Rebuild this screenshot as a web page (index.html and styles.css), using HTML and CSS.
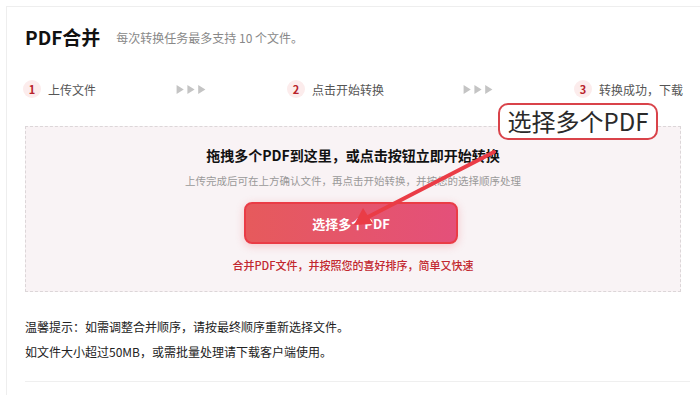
FILE: index.html
```html
<!DOCTYPE html>
<html lang="zh">
<head>
<meta charset="utf-8">
<title>PDF合并</title>
<link rel="stylesheet" href="styles.css">
</head>
<body>
<div class="page">
  <div class="header">
    <h1 class="title">PDF合并</h1>
    <span class="subtitle">每次转换任务最多支持 10 个文件。</span>
  </div>
  <div class="steps">
    <div class="step"><span class="num">1</span><span class="label">上传文件</span></div>
    <div class="arrows">
      <svg width="32" height="10" viewBox="0 0 32 10"><path d="M0 0L8 5L0 10Z M12 0L20 5L12 10Z M24 0L32 5L24 10Z" fill="#c4c4c4"/></svg>
    </div>
    <div class="step"><span class="num">2</span><span class="label">点击开始转换</span></div>
    <div class="arrows">
      <svg width="32" height="10" viewBox="0 0 32 10"><path d="M0 0L8 5L0 10Z M12 0L20 5L12 10Z M24 0L32 5L24 10Z" fill="#c4c4c4"/></svg>
    </div>
    <div class="step"><span class="num">3</span><span class="label">转换成功，下载</span></div>
  </div>
  <div class="dropzone">
    <div class="dz-title">拖拽多个PDF到这里，或点击按钮立即开始转换</div>
    <div class="dz-sub">上传完成后可在上方确认文件，再点击开始转换，并按您的选择顺序处理</div>
    <button class="btn">选择多个PDF</button>
    <div class="dz-tip">合并PDF文件，并按照您的喜好排序，简单又快速</div>
  </div>
  <div class="notes">
    <p>温馨提示：如需调整合并顺序，请按最终顺序重新选择文件。</p>
    <p>如文件大小超过50MB，或需批量处理请下载客户端使用。</p>
  </div>
  <div class="bottom-line"></div>
</div>
<div class="callout">选择多个PDF</div>
<svg class="annot-arrow" width="700" height="395" viewBox="0 0 700 395">
  <line x1="494" y1="152" x2="368" y2="217" stroke="#ea3c46" stroke-width="4" stroke-linecap="round"/>
  <path d="M354 225L363 208L373 224Z" fill="#ea3c46"/>
</svg>
</body>
</html>
```

FILE: styles.css
```css
* { box-sizing: border-box; }
html, body { margin: 0; padding: 0; background: #fff; }
body {
  font-family: "Noto Sans CJK SC", "Noto Sans", "Liberation Sans", sans-serif;
  color: #222;
  position: relative;
  width: 700px;
  height: 395px;
  overflow: hidden;
}
.page {
  margin: 6px 0 0 6px;
  border-top: 1px solid #eeeeee;
  border-left: 1px solid #eeeeee;
  padding: 0 12px 0 18px;
  height: 389px;
}
.header {
  display: flex;
  align-items: center;
  gap: 16px;
  padding-top: 19px;
  height: 41px;
}
.title {
  margin: 0;
  font-size: 19px;
  font-weight: 700;
  line-height: 22px;
  color: #111;
  font-family: "Noto Sans CJK SC", sans-serif;
}
.subtitle {
  font-size: 12px;
  color: #888;
  line-height: 16px;
  padding-top: 2px;
}
.steps {
  display: grid;
  grid-template-columns: 153px 111px 176px 111px 1fr;
  align-items: center;
  margin-top: 31px;
  height: 20px;
  margin-left: -2px;
}
.step {
  display: flex;
  align-items: center;
  gap: 7px;
  white-space: nowrap;
}
.num {
  width: 18px;
  height: 18px;
  border-radius: 50%;
  background: #fcecec;
  color: #b8222a;
  font-size: 11px;
  font-weight: 700;
  display: flex;
  align-items: center;
  justify-content: center;
}
.label {
  font-size: 12px;
  color: #555;
}
.arrows {
  display: flex;
  align-items: center;
  height: 20px;
}
.arrows svg { display: block; width: 30px; height: 9px; }
.dropzone {
  margin-top: 27px;
  width: 656px;
  height: 166px;
  border: 1px dashed #dcd6d8;
  background: #f9f3f5;
  display: flex;
  flex-direction: column;
  align-items: center;
}
.dz-title {
  margin-top: 18px;
  font-size: 14px;
  font-weight: 700;
  color: #111;
  line-height: 20px;
}
.dz-sub {
  margin-top: 8px;
  font-size: 10.5px;
  color: #999;
  line-height: 16px;
}
.btn {
  margin-top: 13px;
  margin-right: 4px;
  width: 214px;
  height: 42px;
  border: 2px solid #ea3c46;
  border-radius: 8px;
  background: linear-gradient(90deg, #e65a5c 0%, #e4507a 100%);
  color: #fff;
  font-family: inherit;
  font-size: 13px;
  font-weight: 700;
  box-shadow: 0 2px 8px rgba(234, 60, 70, 0.25);
}
.dz-tip {
  margin-top: 13px;
  font-size: 11px;
  font-weight: 500;
  color: #c2272f;
  line-height: 16px;
}
.notes {
  margin-top: 22px;
}
.notes p {
  margin: 0;
  font-size: 12px;
  line-height: 25px;
  color: #222;
}
.bottom-line {
  margin-top: 17px;
  height: 1px;
  background: #efefef;
  width: 665px;
}
.callout {
  position: absolute;
  left: 498px;
  top: 103px;
  width: 160px;
  height: 37px;
  border: 2px solid #d9434a;
  border-radius: 10px;
  background: #fff;
  font-size: 24px;
  line-height: 32px;
  color: #2a2a2a;
  text-align: center;
  font-weight: 400;
}
.annot-arrow {
  position: absolute;
  left: 0;
  top: 0;
  pointer-events: none;
}
```
